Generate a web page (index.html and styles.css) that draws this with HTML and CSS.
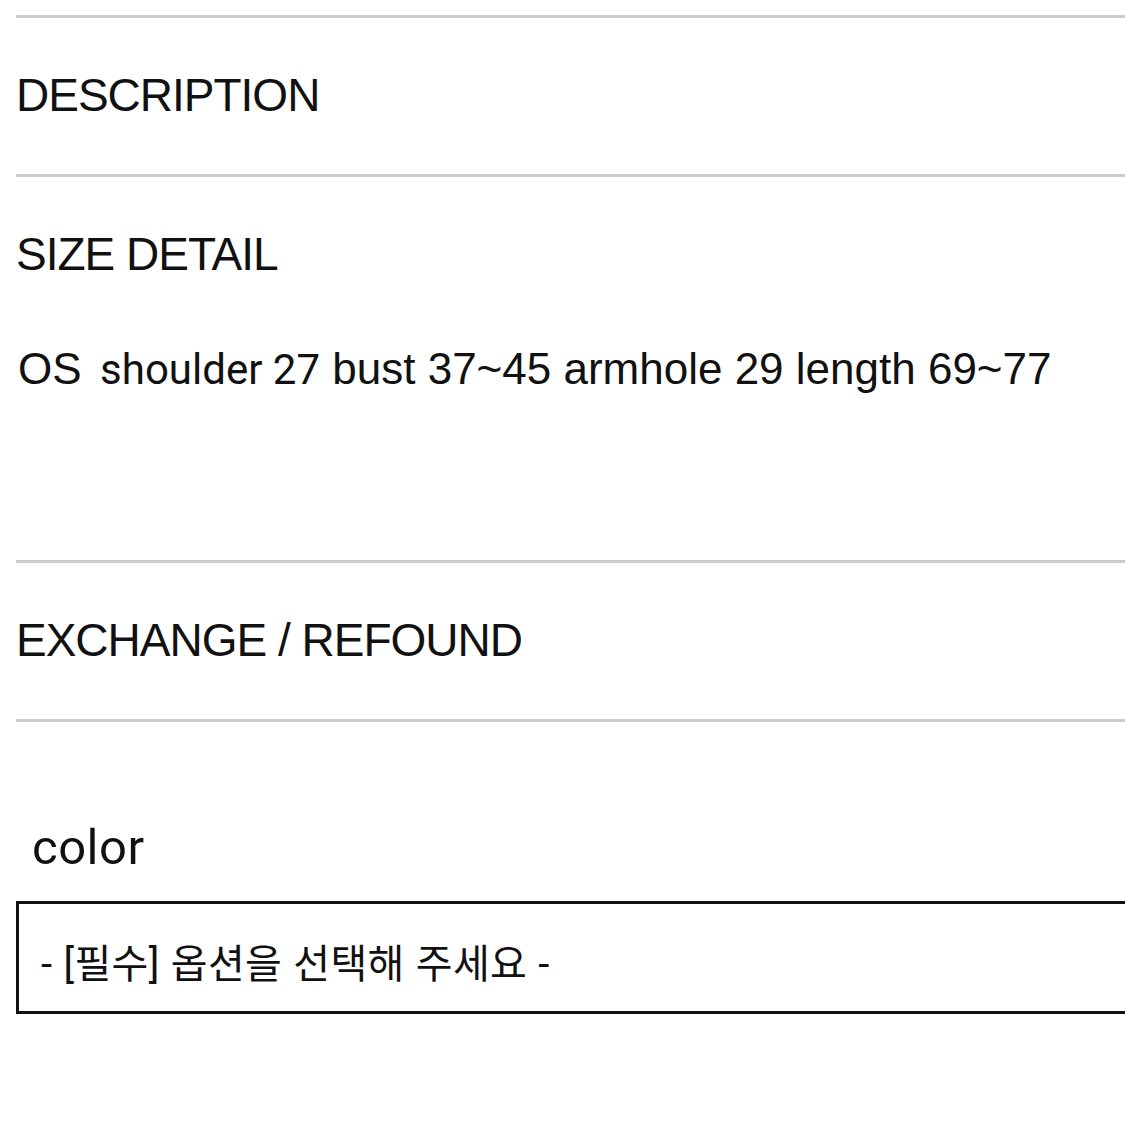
FILE: index.html
```html
<!DOCTYPE html>
<html lang="ko">
<head>
    <meta charset="UTF-8">
    <meta name="viewport" content="width=device-width, initial-scale=1.0">
    <title>Product detail</title>
    <link rel="stylesheet" href="styles.css">
</head>
<body>
    <main class="product-info">
        <section class="info-section">
            <h2>DESCRIPTION</h2>
        </section>
        <section class="info-section size-detail">
            <h2>SIZE DETAIL</h2>
            <p class="size-text">OS&nbsp;<span class="alt-font">shoulder 27</span> bust 37~45 armhole 29 length 69~77</p>
        </section>
        <section class="info-section">
            <h2>EXCHANGE / REFOUND</h2>
        </section>
        <section class="option-section">
            <label class="option-label" for="color-select">color</label>
            <div class="option-select" id="color-select">- [필수] 옵션을 선택해 주세요 -</div>
        </section>
    </main>
</body>
</html>
```

FILE: styles.css
```css
:root {
    --text-color: #111111;
    --line-color: #cccccc;
    --heading-font: 'Liberation Sans', Arial, sans-serif;
    --alt-font: Roboto, 'Noto Sans CJK KR', sans-serif;
}

body {
    margin: 0;
    padding: 0;
    background-color: #ffffff;
    color: var(--text-color);
    font-family: var(--heading-font);
    overflow: hidden;
}

.product-info {
    padding: 15px 0 0 16px;
}

.info-section {
    border-top: 3px solid var(--line-color);
    padding: 54px 0 55px;
}

.info-section h2 {
    margin: 0;
    font-size: 46px;
    line-height: 47px;
    font-weight: 400;
    letter-spacing: -1px;
}

.size-detail {
    padding-bottom: 167px;
}

.size-text {
    margin: 67px 0 0 2px;
    font-size: 44px;
    line-height: 47px;
    letter-spacing: 0;
    white-space: nowrap;
}

.alt-font {
    margin-left: 0.15em;
    font-family: var(--alt-font);
    font-size: 42px;
    letter-spacing: 0;
}

.option-section {
    border-top: 3px solid var(--line-color);
    padding-top: 98px;
}

.option-label {
    display: block;
    margin-left: 16px;
    font-family: var(--alt-font);
    font-size: 49px;
    line-height: 56px;
    letter-spacing: 0.5px;
}

.option-select {
    margin-top: 25px;
    border: 3px solid #111111;
    border-right: none;
    height: 113px;
    box-sizing: border-box;
    padding: 6px 0 0 22px;
    display: flex;
    align-items: center;
    font-family: Roboto, 'Noto Sans CJK KR', sans-serif;
    font-size: 40px;
    letter-spacing: 0.3px;
    word-spacing: 1px;
}
```
